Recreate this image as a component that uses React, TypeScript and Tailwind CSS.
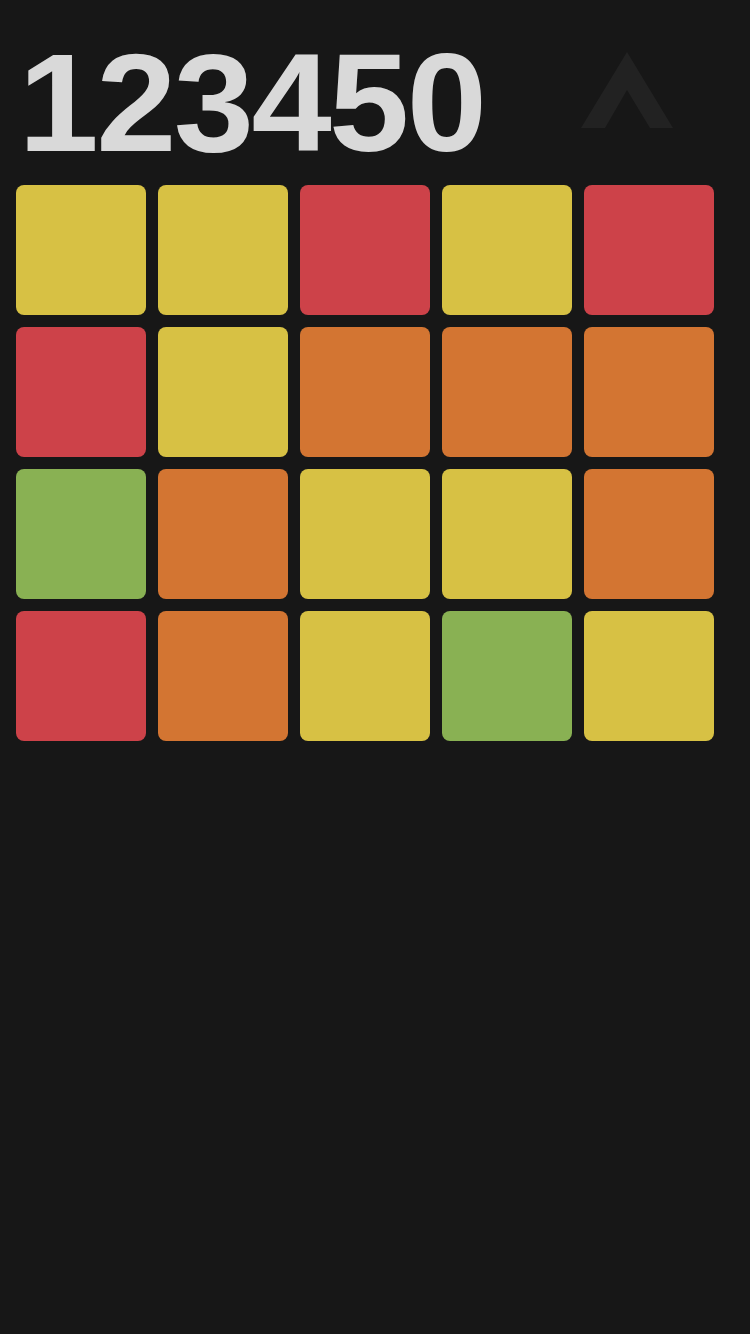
const Y = "bg-[#d7c144]";
const R = "bg-[#cd4249]";
const O = "bg-[#d37532]";
const G = "bg-[#89b153]";

const rows: string[][] = [
  [Y, Y, R, Y, R],
  [R, Y, O, O, O],
  [G, O, Y, Y, O],
  [R, O, Y, G, Y],
];

export default function App() {
  return (
    <div className="w-[750px] h-[1334px] bg-[#171717] overflow-hidden">
      <div className="flex items-start h-[185px]">
        <div
          className="pl-[18px] pt-[33px] text-[140px] leading-[140px] font-bold text-[#d9d9d9] tracking-[-2.5px] scale-x-[1.03] origin-left whitespace-nowrap"
          style={{ fontFamily: '"Liberation Sans", Arial, sans-serif' }}
        >
          123450
        </div>
        <svg
          className="ml-auto mr-[75px] mt-[52px] shrink-0"
          width="94"
          height="77"
          viewBox="0 0 94 77"
        >
          <polygon
            points="46,0 92,76 69,76 46,38 24,76 0,76"
            fill="#222222"
          />
        </svg>
      </div>
      <div className="flex flex-col gap-[12px] pl-[16px]">
        {rows.map((row, i) => (
          <div key={i} className="flex gap-[12px]">
            {row.map((c, j) => (
              <div key={j} className={`w-[130px] h-[130px] rounded-[8px] ${c}`} />
            ))}
          </div>
        ))}
      </div>
    </div>
  );
}
